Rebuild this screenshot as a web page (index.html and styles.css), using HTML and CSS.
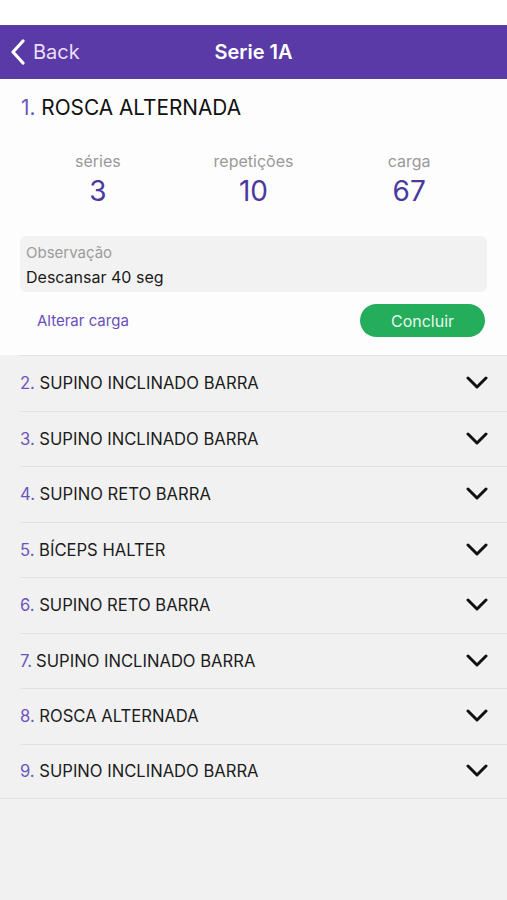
FILE: index.html
```html
<!DOCTYPE html>
<html lang="pt">
<head>
    <meta charset="UTF-8">
    <meta name="viewport" content="width=device-width, initial-scale=1.0">
    <title>Serie 1A</title>
    <link rel="stylesheet" href="styles.css">
</head>
<body>
    <div class="status-bar"></div>

    <header class="nav">
        <a class="back" href="#">
            <svg class="back-icon" width="16" height="26" viewBox="0 0 16 26">
                <path d="M13 2 L3 13 L13 24" fill="none" stroke="#ffffff" stroke-width="3.2" stroke-linecap="round" stroke-linejoin="round"/>
            </svg>
            <span>Back</span>
        </a>
        <h1 class="nav-title">Serie 1A</h1>
    </header>

    <section class="current">
        <h2 class="exercise-title"><span class="num">1.</span> ROSCA ALTERNADA</h2>

        <div class="stats">
            <div class="stat">
                <div class="stat-label">séries</div>
                <div class="stat-value">3</div>
            </div>
            <div class="stat">
                <div class="stat-label">repetições</div>
                <div class="stat-value">10</div>
            </div>
            <div class="stat">
                <div class="stat-label">carga</div>
                <div class="stat-value">67</div>
            </div>
        </div>

        <div class="note">
            <div class="note-label">Observação</div>
            <div class="note-text">Descansar 40 seg</div>
        </div>

        <div class="actions">
            <a class="change-load" href="#">Alterar carga</a>
            <button class="done">Concluir</button>
        </div>
    </section>

    <ul class="exercise-list">
        <li class="row"><span><span class="num">2.</span> SUPINO INCLINADO BARRA</span><svg class="chev" width="22" height="14" viewBox="0 0 22 14"><path d="M2 2 L11 11 L20 2" fill="none" stroke="#111" stroke-width="3" stroke-linecap="round" stroke-linejoin="round"/></svg></li>
        <li class="row"><span><span class="num">3.</span> SUPINO INCLINADO BARRA</span><svg class="chev" width="22" height="14" viewBox="0 0 22 14"><path d="M2 2 L11 11 L20 2" fill="none" stroke="#111" stroke-width="3" stroke-linecap="round" stroke-linejoin="round"/></svg></li>
        <li class="row"><span><span class="num">4.</span> SUPINO RETO BARRA</span><svg class="chev" width="22" height="14" viewBox="0 0 22 14"><path d="M2 2 L11 11 L20 2" fill="none" stroke="#111" stroke-width="3" stroke-linecap="round" stroke-linejoin="round"/></svg></li>
        <li class="row"><span><span class="num">5.</span> BÍCEPS HALTER</span><svg class="chev" width="22" height="14" viewBox="0 0 22 14"><path d="M2 2 L11 11 L20 2" fill="none" stroke="#111" stroke-width="3" stroke-linecap="round" stroke-linejoin="round"/></svg></li>
        <li class="row"><span><span class="num">6.</span> SUPINO RETO BARRA</span><svg class="chev" width="22" height="14" viewBox="0 0 22 14"><path d="M2 2 L11 11 L20 2" fill="none" stroke="#111" stroke-width="3" stroke-linecap="round" stroke-linejoin="round"/></svg></li>
        <li class="row"><span><span class="num tight">7.</span>SUPINO INCLINADO BARRA</span><svg class="chev" width="22" height="14" viewBox="0 0 22 14"><path d="M2 2 L11 11 L20 2" fill="none" stroke="#111" stroke-width="3" stroke-linecap="round" stroke-linejoin="round"/></svg></li>
        <li class="row"><span><span class="num">8.</span> ROSCA ALTERNADA</span><svg class="chev" width="22" height="14" viewBox="0 0 22 14"><path d="M2 2 L11 11 L20 2" fill="none" stroke="#111" stroke-width="3" stroke-linecap="round" stroke-linejoin="round"/></svg></li>
        <li class="row last"><span><span class="num">9.</span> SUPINO INCLINADO BARRA</span><svg class="chev" width="22" height="14" viewBox="0 0 22 14"><path d="M2 2 L11 11 L20 2" fill="none" stroke="#111" stroke-width="3" stroke-linecap="round" stroke-linejoin="round"/></svg></li>
    </ul>
</body>
</html>
```

FILE: styles.css
```css
body {
    font-family: Inter, "Liberation Sans", sans-serif;
    margin: 0;
    padding: 0;
    background-color: #f1f1f1;
    color: #111;
    min-height: 900px;
}
.status-bar {
    height: 25px;
    background-color: #fff;
}
.nav {
    height: 54px;
    background-color: #5a3aa6;
    display: flex;
    align-items: center;
    justify-content: center;
    position: relative;
}
.back {
    position: absolute;
    left: 10px;
    top: 0;
    bottom: 0;
    display: flex;
    align-items: center;
    gap: 7px;
    color: #eadff7;
    text-decoration: none;
    font-size: 20px;
}
.back-icon {
    display: block;
}
.nav-title {
    margin: 0;
    color: #fff;
    font-size: 20px;
    font-weight: 600;
}
.current {
    background-color: #fdfdfd;
    padding: 16px 20px 18px;
}
.exercise-title {
    margin: 0;
    font-size: 20.8px;
    font-weight: 400;
    padding-left: 1px;
}
.num {
    color: #6b55bd;
}
.num.tight {
    margin-right: 4px;
}
.stats {
    display: grid;
    grid-template-columns: 1fr 1fr 1fr;
    margin-top: 31px;
    text-align: center;
}
.stat-label {
    color: #999;
    font-size: 16px;
    line-height: 20px;
}
.stat-value {
    color: #4b3a9e;
    font-size: 28px;
    line-height: 34px;
    margin-top: 3px;
}
.note {
    margin-top: 28px;
    background-color: #f2f2f2;
    border-radius: 6px;
    padding: 7px 6px 5px;
    height: 44px;
}
.note-label {
    color: #9c9c9c;
    font-size: 15px;
    line-height: 20px;
}
.note-text {
    font-size: 16px;
    line-height: 22px;
    margin-top: 3px;
    color: #1a1a1a;
}
.actions {
    display: flex;
    justify-content: space-between;
    align-items: center;
    margin-top: 12px;
}
.change-load {
    color: #6a4fba;
    text-decoration: none;
    font-size: 15px;
    margin-left: 17px;
}
.done {
    width: 125px;
    height: 33px;
    border: none;
    border-radius: 17px;
    background-color: #24ad5b;
    color: #e9f7ee;
    font-family: inherit;
    font-size: 16px;
    margin-right: 2px;
}
.exercise-list {
    list-style: none;
    margin: 0;
    padding: 0 0 0 20px;
}
.row {
    height: 54.5px;
    display: flex;
    justify-content: space-between;
    align-items: center;
    border-top: 1px solid #e2e2e2;
    padding-right: 19px;
    font-size: 16.6px;
    color: #1c1c1c;
}
.row.last {
    border-bottom: 1px solid #e2e2e2;
    margin-left: -20px;
    padding-left: 20px;
    border-top: none;
    background-image: linear-gradient(#e2e2e2, #e2e2e2);
    background-size: calc(100% - 20px) 1px;
    background-position: 20px 0;
    background-repeat: no-repeat;
}
.chev {
    display: block;
}
```
